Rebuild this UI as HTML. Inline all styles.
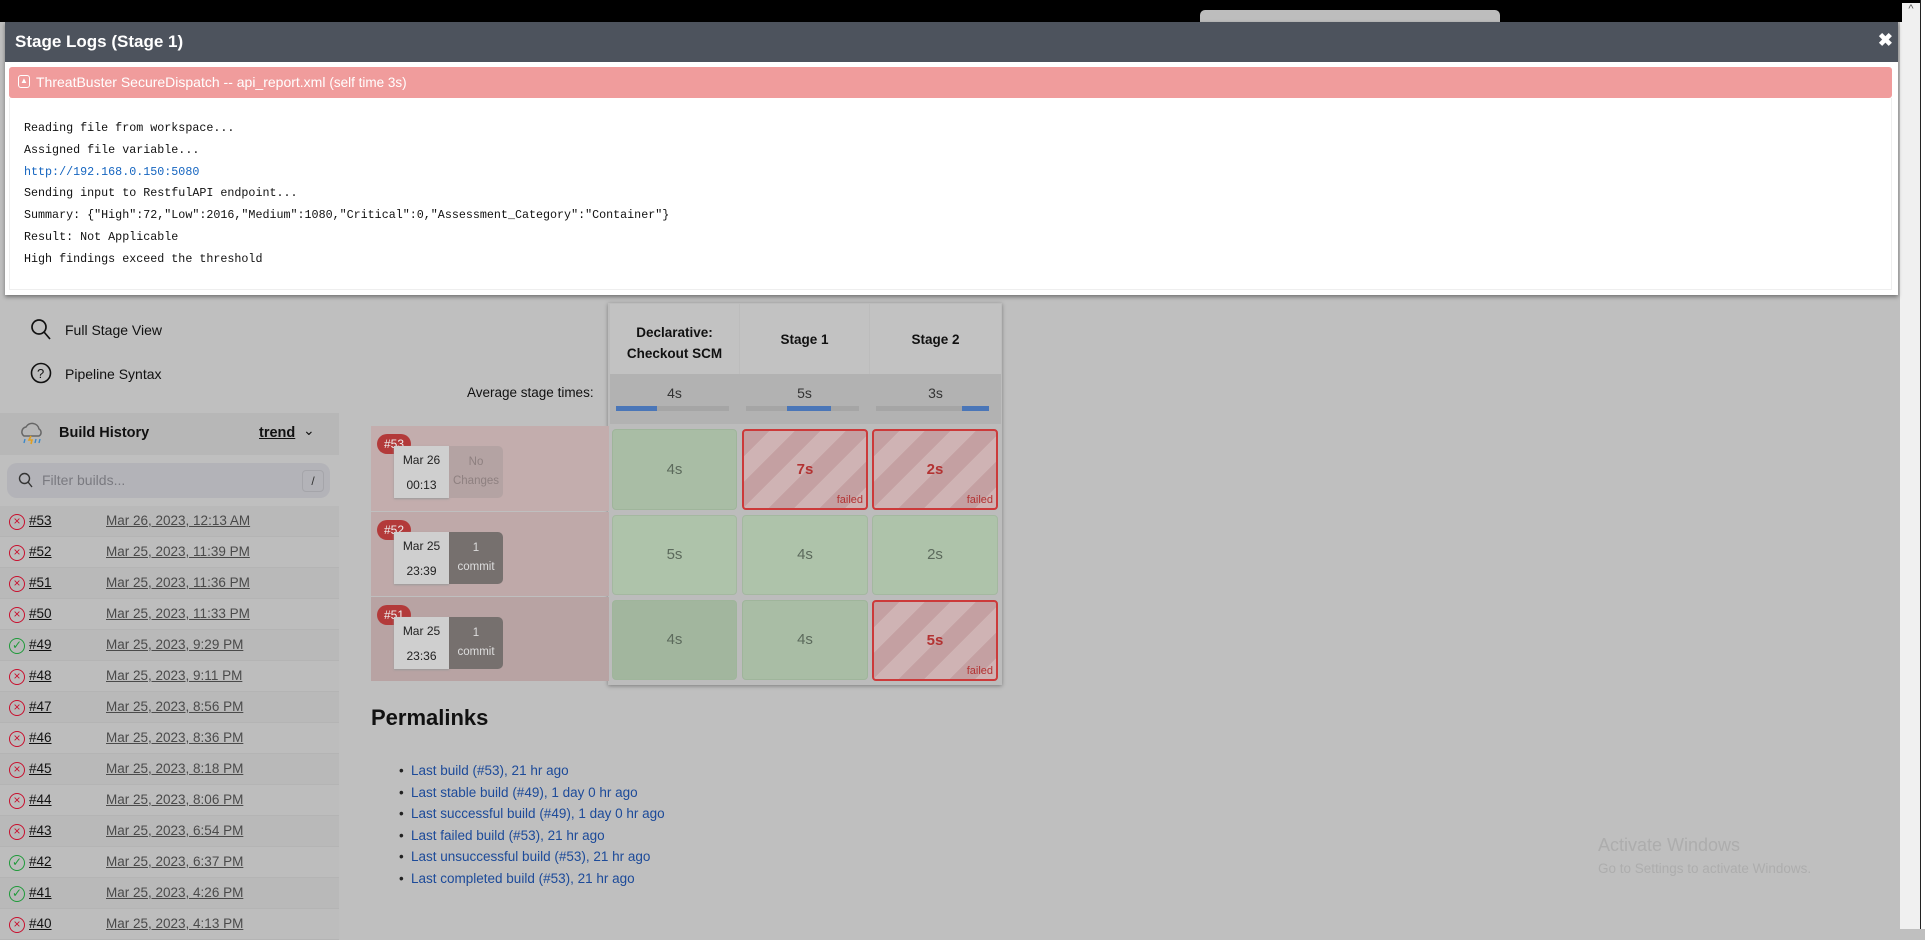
<!DOCTYPE html>
<html><head><meta charset="utf-8"><style>
*{margin:0;padding:0;box-sizing:border-box}
body{width:1925px;height:929px;overflow:hidden;background:#bfbfbf;font-family:"Liberation Sans",sans-serif;position:relative}
.a{position:absolute}
.mono{font-family:"Liberation Mono",monospace;font-size:11.7px;color:#111}
.row{position:absolute;left:0;width:339px;height:31px;border-bottom:1px solid #b4b4b4}
.row .ic{position:absolute;left:9px;top:8px;width:16px;height:16px;border:1.6px solid #c8102e;border-radius:50%;color:#c8102e;font-size:12px;line-height:12px;text-align:center}
.row .ic.ok{border-color:#1f9a3a;color:#1f9a3a}
.row .n{position:absolute;left:29px;top:7px;font-size:13.5px;color:#111;text-decoration:underline}
.row .d{position:absolute;left:106px;top:7px;font-size:13.5px;color:#4a4a4a;text-decoration:underline}
.cell{position:absolute;border-radius:4px;text-align:center;font-size:15px;color:#5c6a5c}
.g{background:#a9bda5;border:1px solid #9fb59b}
.g2{background:#aec3aa;border:1px solid #a4b8a0}
.f{border:2px solid #cc3a3a;background:repeating-linear-gradient(135deg,#c4a0a2 0 18px,#cfb3b4 18px 36px);color:#b33232;font-weight:bold}
.f .fl{position:absolute;right:3px;bottom:2px;font-size:11px;font-weight:normal;color:#b33232}
.lbl{position:absolute;left:371px;width:238px;background:#c3adad}
.badge{position:absolute;left:6px;top:8px;background:#b33a3a;color:#eee;font-size:12px;border-radius:10px;padding:3px 7px}
.date{position:absolute;left:23px;top:20px;width:55px;height:52px;background:#cfcfcf;text-align:center;font-size:12px;color:#222;line-height:25px;padding-top:2px;box-shadow:0 1px 2px #999}
.chg{position:absolute;left:78px;top:20px;width:54px;height:52px;border-radius:0 5px 5px 0;text-align:center;font-size:11.5px;line-height:19px;padding-top:7px}
.pl{position:absolute;left:411px;font-size:13.5px;color:#1c4a99}
.pl:before{content:"•";position:absolute;left:-12px;color:#222}
</style></head><body>
<div class="a" style="left:0;top:0;width:1925px;height:22px;background:#000"></div>
<div class="a" style="left:1200px;top:10px;width:300px;height:12px;background:#bdbdbd;border-radius:5px 5px 0 0"></div>
<div class="a" style="left:1900px;top:22px;width:20px;height:907px;background:#f0f0f0"></div>
<div class="a" style="left:1902px;top:3px;width:18px;height:20px;background:#f0f0f0;color:#555;font-size:11px;text-align:center">^</div>
<div class="a" style="left:1920px;top:0;width:5px;height:929px;background:#fff;border-left:1px solid #222"></div>

<div class="a" style="left:5px;top:22px;width:1893px;height:273px;background:#fff;box-shadow:0 2px 4px rgba(0,0,0,.4)">
 <div class="a" style="left:0;top:0;width:1893px;height:40px;background:#4d535d"></div>
 <div class="a" style="left:10px;top:10px;color:#fff;font-weight:bold;font-size:17px">Stage Logs (Stage 1)</div>
 <div class="a" style="right:5px;top:8px;color:#fff;font-weight:bold;font-size:18px">✖</div>
 <div class="a" style="left:4px;top:45px;width:1883px;height:31px;background:#f09c9c;border-radius:3px"></div>
 <div class="a" style="left:13px;top:53px;width:12px;height:13px;border:1.5px solid #fff;border-radius:3px;color:#fff;font-size:8px;line-height:9px;text-align:center">▲</div>
 <div class="a" style="left:31px;top:52px;color:#fff;font-size:14px">ThreatBuster SecureDispatch -- api_report.xml <span style="font-size:13.5px">(self time 3s)</span></div>
 <div class="a" style="left:4px;top:76px;width:1883px;height:192px;border:1px solid #eee;border-top:none"></div>
 <div class="a mono" style="left:19px;top:99px">Reading file from workspace...</div>
 <div class="a mono" style="left:19px;top:121px">Assigned file variable...</div>
 <div class="a mono" style="left:19px;top:143px;color:#1565c0">http://192.168.0.150:5080</div>
 <div class="a mono" style="left:19px;top:164px">Sending input to RestfulAPI endpoint...</div>
 <div class="a mono" style="left:19px;top:186px">Summary: {"High":72,"Low":2016,"Medium":1080,"Critical":0,"Assessment_Category":"Container"}</div>
 <div class="a mono" style="left:19px;top:208px">Result: Not Applicable</div>
 <div class="a mono" style="left:19px;top:230px">High findings exceed the threshold</div>
</div>

<svg class="a" style="left:30px;top:318px" width="22" height="24"><circle cx="9" cy="9" r="7" fill="none" stroke="#111" stroke-width="1.7"/><line x1="14" y1="14" x2="20" y2="21" stroke="#111" stroke-width="1.7"/></svg>
<div class="a" style="left:65px;top:322px;font-size:14px;color:#111">Full Stage View</div>
<svg class="a" style="left:30px;top:362px" width="22" height="22"><circle cx="11" cy="11" r="9.5" fill="none" stroke="#111" stroke-width="1.6"/><text x="7" y="16" font-size="13" font-family="Liberation Sans" fill="#111">?</text></svg>
<div class="a" style="left:65px;top:366px;font-size:14px;color:#111">Pipeline Syntax</div>

<div class="a" style="left:0;top:413px;width:339px;height:42px;background:#b7b7b7"></div>
<svg class="a" style="left:19px;top:422px" width="26" height="24"><path d="M5 14a5 5 0 0 1 2-9 7 7 0 0 1 13 2 4 4 0 0 1 0 7z" fill="none" stroke="#666" stroke-width="1.5"/><path d="M12 14l-2 4h3l-1 4" stroke="#e0a020" stroke-width="1.6" fill="none"/><path d="M6 17l-1 4M17 17l-1 4M21 17l-1 4" stroke="#3b88c8" stroke-width="1.4"/></svg>
<div class="a" style="left:59px;top:425px;font-size:14.5px;font-weight:bold;color:#111">Build History</div>
<div class="a" style="left:259px;top:425px;font-size:14.5px;font-weight:bold;color:#111;text-decoration:underline">trend</div>
<div class="a" style="left:303px;top:422px;font-size:14px;color:#111">⌄</div>
<div class="a" style="left:7px;top:463px;width:323px;height:35px;background:#b3b3b8;border-radius:10px"></div>
<svg class="a" style="left:18px;top:472px" width="16" height="17"><circle cx="6.5" cy="6.5" r="5" fill="none" stroke="#333" stroke-width="1.4"/><line x1="10" y1="10" x2="14" y2="15" stroke="#333" stroke-width="1.4"/></svg>
<div class="a" style="left:42px;top:472px;font-size:14px;color:#7a7a80">Filter builds...</div>
<div class="a" style="left:302px;top:470px;width:22px;height:22px;border:1px solid #a5a5aa;border-radius:4px;font-size:12px;text-align:center;line-height:20px;color:#333">/</div>

<div class="row" style="top:506px;background:#b9b9b9"><div class="ic">×</div><div class="n">#53</div><div class="d">Mar 26, 2023, 12:13 AM</div></div>
<div class="row" style="top:537px;background:#bdbdbd"><div class="ic">×</div><div class="n">#52</div><div class="d">Mar 25, 2023, 11:39 PM</div></div>
<div class="row" style="top:568px;background:#b9b9b9"><div class="ic">×</div><div class="n">#51</div><div class="d">Mar 25, 2023, 11:36 PM</div></div>
<div class="row" style="top:599px;background:#bdbdbd"><div class="ic">×</div><div class="n">#50</div><div class="d">Mar 25, 2023, 11:33 PM</div></div>
<div class="row" style="top:630px;background:#b9b9b9"><div class="ic ok">✓</div><div class="n">#49</div><div class="d">Mar 25, 2023, 9:29 PM</div></div>
<div class="row" style="top:661px;background:#bdbdbd"><div class="ic">×</div><div class="n">#48</div><div class="d">Mar 25, 2023, 9:11 PM</div></div>
<div class="row" style="top:692px;background:#b9b9b9"><div class="ic">×</div><div class="n">#47</div><div class="d">Mar 25, 2023, 8:56 PM</div></div>
<div class="row" style="top:723px;background:#bdbdbd"><div class="ic">×</div><div class="n">#46</div><div class="d">Mar 25, 2023, 8:36 PM</div></div>
<div class="row" style="top:754px;background:#b9b9b9"><div class="ic">×</div><div class="n">#45</div><div class="d">Mar 25, 2023, 8:18 PM</div></div>
<div class="row" style="top:785px;background:#bdbdbd"><div class="ic">×</div><div class="n">#44</div><div class="d">Mar 25, 2023, 8:06 PM</div></div>
<div class="row" style="top:816px;background:#b9b9b9"><div class="ic">×</div><div class="n">#43</div><div class="d">Mar 25, 2023, 6:54 PM</div></div>
<div class="row" style="top:847px;background:#bdbdbd"><div class="ic ok">✓</div><div class="n">#42</div><div class="d">Mar 25, 2023, 6:37 PM</div></div>
<div class="row" style="top:878px;background:#b9b9b9"><div class="ic ok">✓</div><div class="n">#41</div><div class="d">Mar 25, 2023, 4:26 PM</div></div>
<div class="row" style="top:909px;background:#bdbdbd"><div class="ic">×</div><div class="n">#40</div><div class="d">Mar 25, 2023, 4:13 PM</div></div>

<div class="a" style="left:608px;top:303px;width:394px;height:382px;background:#bcbcbc;box-shadow:0 1px 4px rgba(0,0,0,.35)"></div>
<div class="a" style="left:610px;top:304px;width:129px;height:70px;background:#c2c2c2"></div>
<div class="a" style="left:740px;top:304px;width:129px;height:70px;background:#c2c2c2"></div>
<div class="a" style="left:870px;top:304px;width:131px;height:70px;background:#c2c2c2"></div>
<div class="a" style="left:610px;top:322px;width:129px;text-align:center;font-size:13.5px;font-weight:bold;line-height:21px;color:#111">Declarative:<br>Checkout SCM</div>
<div class="a" style="left:740px;top:332px;width:129px;text-align:center;font-size:13.5px;font-weight:bold;color:#111">Stage 1</div>
<div class="a" style="left:870px;top:332px;width:131px;text-align:center;font-size:13.5px;font-weight:bold;color:#111">Stage 2</div>
<div class="a" style="left:610px;top:374px;width:391px;height:50px;background:#b2b2b2"></div>
<div class="a" style="left:467px;top:385px;font-size:13.5px;color:#111">Average stage times:</div>
<div class="a" style="left:610px;top:385px;width:129px;text-align:center;font-size:14px;color:#333">4s</div>
<div class="a" style="left:740px;top:385px;width:129px;text-align:center;font-size:14px;color:#333">5s</div>
<div class="a" style="left:870px;top:385px;width:131px;text-align:center;font-size:14px;color:#333">3s</div>
<div class="a" style="left:616px;top:406px;width:113px;height:5px;background:#a5a5a5"><div style="width:41px;height:5px;background:#4a76b8"></div></div>
<div class="a" style="left:746px;top:406px;width:113px;height:5px;background:#a5a5a5"><div style="margin-left:41px;width:44px;height:5px;background:#4a76b8"></div></div>
<div class="a" style="left:876px;top:406px;width:113px;height:5px;background:#a5a5a5"><div style="margin-left:86px;width:27px;height:5px;background:#4a76b8"></div></div>

<div class="lbl" style="top:426px;height:85px"></div>
<div class="lbl" style="top:512px;height:84px;background:#bfa9a9"></div>
<div class="lbl" style="top:597px;height:84px;background:#b8a3a3"></div>
<div class="a" style="left:371px;top:426px"><div class="badge">#53</div><div class="date">Mar 26<br>00:13</div><div class="chg" style="background:#b4a3a3;color:#8e8080">No<br>Changes</div></div>
<div class="a" style="left:371px;top:512px"><div class="badge">#52</div><div class="date">Mar 25<br>23:39</div><div class="chg" style="background:#76706e;color:#ddd">1<br>commit</div></div>
<div class="a" style="left:371px;top:597px"><div class="badge">#51</div><div class="date">Mar 25<br>23:36</div><div class="chg" style="background:#76706e;color:#ddd">1<br>commit</div></div>

<div class="cell g" style="left:612px;top:429px;width:125px;height:81px;line-height:79px">4s</div>
<div class="cell f" style="left:742px;top:429px;width:126px;height:81px;line-height:77px">7s<span class="fl" style="line-height:12px">failed</span></div>
<div class="cell f" style="left:872px;top:429px;width:126px;height:81px;line-height:77px">2s<span class="fl" style="line-height:12px">failed</span></div>
<div class="cell g2" style="left:612px;top:515px;width:125px;height:80px;line-height:78px">5s</div>
<div class="cell g2" style="left:742px;top:515px;width:126px;height:80px;line-height:78px">4s</div>
<div class="cell g2" style="left:872px;top:515px;width:126px;height:80px;line-height:78px">2s</div>
<div class="cell g" style="left:612px;top:600px;width:125px;height:80px;line-height:78px;background:#a2b69e">4s</div>
<div class="cell g" style="left:742px;top:600px;width:126px;height:80px;line-height:78px">4s</div>
<div class="cell f" style="left:872px;top:600px;width:126px;height:81px;line-height:77px">5s<span class="fl" style="line-height:12px">failed</span></div>

<div class="a" style="left:371px;top:705px;font-size:22px;font-weight:bold;color:#111">Permalinks</div>
<div class="pl" style="top:763px">Last build (#53), 21 hr ago</div>
<div class="pl" style="top:785px">Last stable build (#49), 1 day 0 hr ago</div>
<div class="pl" style="top:806px">Last successful build (#49), 1 day 0 hr ago</div>
<div class="pl" style="top:828px">Last failed build (#53), 21 hr ago</div>
<div class="pl" style="top:849px">Last unsuccessful build (#53), 21 hr ago</div>
<div class="pl" style="top:871px">Last completed build (#53), 21 hr ago</div>

<div class="a" style="left:1598px;top:835px;font-size:18px;color:#adadad">Activate Windows</div>
<div class="a" style="left:1598px;top:861px;font-size:13.5px;color:#adadad">Go to Settings to activate Windows.</div>
</body></html>
